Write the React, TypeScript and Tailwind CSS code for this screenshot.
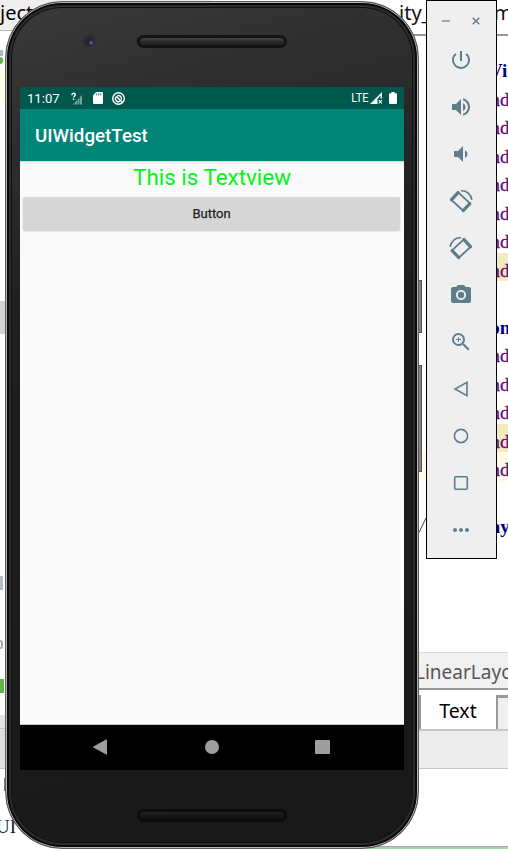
import type { ReactNode } from 'react';
import {
  MdPowerSettingsNew,
  MdVolumeUp,
  MdVolumeDown,
  MdCameraAlt,
  MdZoomIn,
  MdMoreHoriz,
} from 'react-icons/md';

type CodeLine = { text: string; tone?: 'tag' | 'attr'; mark?: boolean; pad?: string };

const attr: CodeLine = { text: 'and', tone: 'attr' };

const lines: CodeLine[] = [
  { text: 'Vi', tone: 'tag', pad: 'pl-[71px]' },
  attr, attr, attr, attr, attr, attr,
  { ...attr, mark: true },
  { text: '' },
  { text: 'ton', tone: 'tag', pad: 'pl-[66px]' },
  attr, attr, attr,
  { ...attr, mark: true },
  attr,
  { text: '' },
  { text: 'Lay', tone: 'tag', pad: 'pl-[60px]' },
];

function RotateIcon({ mirrored = false }: { mirrored?: boolean }) {
  return (
    <svg width="24" height="24" viewBox="0 0 24 24" className={mirrored ? '-scale-x-100' : ''}>
      <path d="M9.2 3.4 2.4 10.9 14.2 21.7 21 14.4Z" fill="none" stroke="#607d8b" strokeWidth="1.9" strokeLinejoin="round" />
      <path d="M9 3.6 2.6 10.7M14.4 21.5 20.8 14.6" fill="none" stroke="#607d8b" strokeWidth="3.3" strokeLinecap="round" />
      <path d="M12 1.8c5.6-.4 10 3.4 10.9 9" fill="none" stroke="#607d8b" strokeWidth="1.6" />
    </svg>
  );
}

function Ide() {
  return (
    <div className="flex h-[849px] w-[508px] overflow-hidden bg-white">
      <div className="flex w-[210px] flex-col">
        <div className="h-[31px] border-b border-[#b8b8b8] bg-[#efefef] font-['Noto_Sans'] text-[20px] leading-[26px]">
          <span>ject</span>
        </div>
        <div className="mt-[19px] h-[6px] w-[3px] bg-[#a9b7c6]" />
        <div className="mt-px h-[7px] w-[3px] rounded-r-full bg-[#62b543]" />
        <div className="mt-[6px] h-[32px] bg-[#ffffe4]" />
        <div className="mt-[199px] h-[33px] bg-[#d2d2d2]" />
        <div className="mt-[242px] h-[14px] w-[3px] bg-[#b2bcc4]" />
        <div className="mt-[50px] h-[9px] w-[3px] rounded-r-full border-2 border-l-0 border-[#a4adb5]" />
        <div className="mt-[30px] h-[14px] w-[4px] bg-[#62b543]" />
        <div className="mt-[22px] h-[14px] border-b border-[#c4c4c4] bg-[#e3e3e3]" />
        <div className="h-[40px] border-b border-[#c4c4c4] bg-[#dedede]" />
        <div className="ml-[4px] mt-[9px] h-[13px] w-[3px] bg-[#777]" />
        <div className="mt-[23px] pl-[1px] font-['Liberation_Serif'] text-[19px] leading-[26px] text-[#222]">
          <span className="-ml-[5px]">UI</span>
        </div>
      </div>
      <div className="flex w-[298px] flex-col">
        <div className="h-[36px] shrink-0 border-b-2 border-[#999] bg-white pl-[189px] font-['Noto_Sans'] text-[20px] leading-[26px] text-[#111]">
          <span className="whitespace-nowrap">ity_main.xm</span>
        </div>
        <div className="flex flex-col pt-[17px]">
          {lines.map((line, i) => (
            <div key={i} className={`flex h-[28.5px] pl-[208px] ${i === 14 ? 'bg-[#fffae3]' : ''}`}>
              <div className={`ml-[10px] flex flex-1 items-center pt-[7px] ${line.mark ? 'bg-[#f6ebbc]' : ''}`}>
                <span
                  className={`font-['Liberation_Serif'] text-[19px] leading-none ${line.pad ?? 'pl-[64px]'} -ml-[10px] ${
                    line.tone === 'tag' ? 'font-bold text-[#000080]' : 'text-[#660e7a] [-webkit-text-stroke:0.35px_#660e7a]'
                  }`}
                >
                  {line.text}
                </span>
              </div>
            </div>
          ))}
        </div>
        <div className="mt-[114.5px] flex h-[38px] shrink-0 items-center border-b-2 border-t border-b-[#999] border-t-[#ddd] bg-[#f0f0f0] pl-[205px] pt-[3px] font-['Noto_Sans'] text-[19px] text-[#555]">
          LinearLayout
        </div>
        <div className="flex h-[41px] shrink-0 items-end border-b-2 border-[#c6c6c6] pl-[209px] pt-[5px]">
          <div className="flex h-full w-[77px] items-center justify-center border-l-2 border-[#999] bg-white pb-[2px] pr-px font-['Noto_Sans'] text-[19.5px] text-black">
            Text
          </div>
          <div className="h-full flex-1 border-l-2 border-t-[3px] border-[#999] bg-[#f0f0f0]" />
        </div>
        <div className="h-[38px] shrink-0 border-b border-[#c6c6c6] bg-[#ececec]" />
        <div className="flex-1" />
        <div className="h-[3px] shrink-0 border-t border-[#aaa] bg-[#a5d6a7]" />
      </div>
    </div>
  );
}

function StatusBar() {
  return (
    <div className="flex h-[22px] items-center bg-[#00574b] pl-[7px] pr-[7px] text-white">
      <span className="w-[44px] origin-left scale-x-[0.97] pt-px text-[13.5px] leading-none">11:07</span>
      <svg width="12" height="13" viewBox="0 0 12 13">
        <path d="M1.5 12.5h2V10.5l-2 2Z M4 12.5h2V8L4 10Z M6.5 12.5h2V5.5l-2 2Z M9 12.5h2V3L9 5Z" fill="#fff" opacity=".45" />
        <path d="M.9 3.2C.9.7 4.3.8 4.3 2.8 4.3 4.2 2.6 4.2 2.6 5.6M2.6 6.6v1.5" stroke="#fff" strokeWidth="1.4" fill="none" />
      </svg>
      <svg width="10" height="12" viewBox="0 0 10 12" className="ml-[10px]">
        <path d="M3.2 0H9a1 1 0 0 1 1 1v10a1 1 0 0 1-1 1H1a1 1 0 0 1-1-1V3.3Z" fill="#fff" />
        <path d="M3.7 1.4v2M5.7 1.4v2M7.7 1.4v2" stroke="#00574b" strokeWidth=".8" />
      </svg>
      <svg width="13" height="13" viewBox="0 0 13 13" className="ml-[9px]" fill="none" stroke="#fff">
        <circle cx="6.5" cy="6.5" r="5.8" strokeWidth="1.4" />
        <path d="M8 9.2A3 3 0 0 1 3.9 5M5.2 3.8a3 3 0 0 1 4 4" strokeWidth="1.4" />
        <path d="m4.2 4.2 5.8 5.8" strokeWidth="1.6" />
      </svg>
      <span className="ml-auto origin-right scale-x-[0.88] text-[12.5px] leading-none">LTE</span>
      <svg width="13" height="12" viewBox="0 0 13 12" className="ml-[1px]">
        <path d="M0 12 12 0v6.5h-1.5V3.5L7.5 6.7V12Z" fill="#fff" />
        <path d="m8.8 8 3 3.4m0-3.4-3 3.4" stroke="#fff" strokeWidth="1.1" />
      </svg>
      <svg width="8" height="12" viewBox="0 0 8 12" className="ml-[6px]">
        <path d="M2.4 0h3.2v1.2H7a1 1 0 0 1 1 1V11a1 1 0 0 1-1 1H1a1 1 0 0 1-1-1V2.2a1 1 0 0 1 1-1h1.4Z" fill="#fff" />
      </svg>
    </div>
  );
}

function Speaker({ dark = false }: { dark?: boolean }) {
  return (
    <div
      className={`h-[13px] w-[150px] rounded-full border-[3px] bg-gradient-to-b ${
        dark ? 'border-[#0c0c0c] from-[#262626] via-[#161616] to-[#121212]' : 'border-[#131313] from-[#454545] via-[#2b2b2b] to-[#232323]'
      }`}
    />
  );
}

function Phone() {
  return (
    <div className="absolute left-[5px] top-[1px] h-[848px] w-[414px]">
      <div className="absolute left-[413px] top-[279px] h-[53px] w-[4px] border border-[#555] bg-[#858085]" />
      <div className="absolute left-[413px] top-[364px] h-[107px] w-[4px] border border-[#555] bg-[#858085]" />
      <div className="relative flex h-full flex-col rounded-[57px] border border-[#5c5c5c] bg-[linear-gradient(165deg,#3a3a3a_0%,#303030_12%,#1f1f1f_34%,#181818_100%)] px-[14px] shadow-[inset_0_0_0_1px_#b5b5b5,inset_0_0_0_3px_#090909,inset_0_0_0_5px_#2d2d2d,inset_0_0_0_6px_#101010] font-['Roboto']">
        <div className="flex h-[85px] shrink-0 items-start pt-[33px]">
          <div className="ml-[63px] flex h-[12px] w-[12px] items-center justify-center rounded-full bg-[#2c2a30]">
            <div className="h-[7px] w-[7px] rounded-full bg-[radial-gradient(circle_at_75%_70%,#8a86a0_0%,#2b2740_30%,#1c1a24_100%)]" />
          </div>
          <div className="ml-[42px]">
            <Speaker />
          </div>
        </div>
        <div className="flex h-[683px] w-[384px] shrink-0 flex-col bg-[#fafafa]">
          <StatusBar />
          <div className="flex h-[52px] items-center bg-[#008577] pl-[15px] pt-[3px] text-[18.75px] font-medium text-white shadow-[0_1px_2px_rgba(0,0,0,0.18)]">
            UIWidgetTest
          </div>
          <div className="flex h-[34px] items-center justify-center text-[22.4px] text-[#00f517]">This is Textview</div>
          <div className="ml-[3px] mr-[4px] mt-[2px] flex h-[33px] items-center justify-center rounded-[2px] bg-[#d6d6d6] pt-px text-[13px] text-[#222] shadow-[0_1px_2px_rgba(0,0,0,0.2)] [-webkit-text-stroke:0.25px_#222]">
            Button
          </div>
          <div className="flex-1 border-b border-[#c6c6c6]" />
          <div className="flex h-[45px] items-center bg-black pb-[2px]">
            <svg width="14" height="16" viewBox="0 0 14 16" className="ml-[73px]">
              <path d="M13.5.8v14.4L.5 8Z" fill="#9e9e9e" stroke="#9e9e9e" strokeLinejoin="round" />
            </svg>
            <div className="ml-[98px] h-[14px] w-[14px] rounded-full bg-[#9e9e9e]" />
            <div className="ml-[96px] h-[14px] w-[15px] rounded-[1px] bg-[#9e9e9e]" />
          </div>
        </div>
        <div className="flex justify-center pt-[39px]">
          <Speaker dark />
        </div>
      </div>
    </div>
  );
}

function Tool({ children }: { children: ReactNode }) {
  return <div className="flex h-[47px] items-center justify-center pr-px">{children}</div>;
}

function Toolbar() {
  const outline = { fill: 'none', stroke: '#607d8b', strokeWidth: 1.6 };
  return (
    <div className="absolute left-[426px] top-0 h-[559px] w-[71px] border border-black bg-[#efefef] text-[#607d8b]">
      <div className="flex h-[35px] items-center pl-[15px] pt-[5px]">
        <div className="h-[1.5px] w-[8px] bg-[#9babb3]" />
        <svg width="8" height="8" viewBox="0 0 8 8" className="ml-[22px]">
          <path d="m.7.7 6.6 6.6m0-6.6L.7 7.3" stroke="#607d8b" strokeWidth="1.4" />
        </svg>
      </div>
      <Tool><MdPowerSettingsNew size={24} /></Tool>
      <Tool><MdVolumeUp size={24} /></Tool>
      <Tool><MdVolumeDown size={24} /></Tool>
      <Tool><RotateIcon /></Tool>
      <Tool><RotateIcon mirrored /></Tool>
      <Tool><MdCameraAlt size={24} /></Tool>
      <Tool><MdZoomIn size={24} /></Tool>
      <Tool>
        <svg width="16" height="16" viewBox="0 0 16 16"><path d="M14 1.3v13.4L2 8Z" {...outline} /></svg>
      </Tool>
      <Tool>
        <svg width="16" height="16" viewBox="0 0 16 16"><circle cx="8" cy="8" r="6.6" {...outline} /></svg>
      </Tool>
      <Tool>
        <svg width="16" height="16" viewBox="0 0 16 16"><rect x="1.7" y="1.7" width="12.6" height="12.6" rx="1" {...outline} /></svg>
      </Tool>
      <Tool><MdMoreHoriz size={24} /></Tool>
    </div>
  );
}

export default function App() {
  return (
    <div className="relative h-[849px] w-[508px] overflow-hidden">
      <Ide />
      <Phone />
      <Toolbar />
      <svg className="absolute left-[419px] top-[517px]" width="7" height="16" viewBox="0 0 7 16">
        <path d="M0 15.5 7 1" stroke="#444" strokeWidth="1" />
      </svg>
    </div>
  );
}
